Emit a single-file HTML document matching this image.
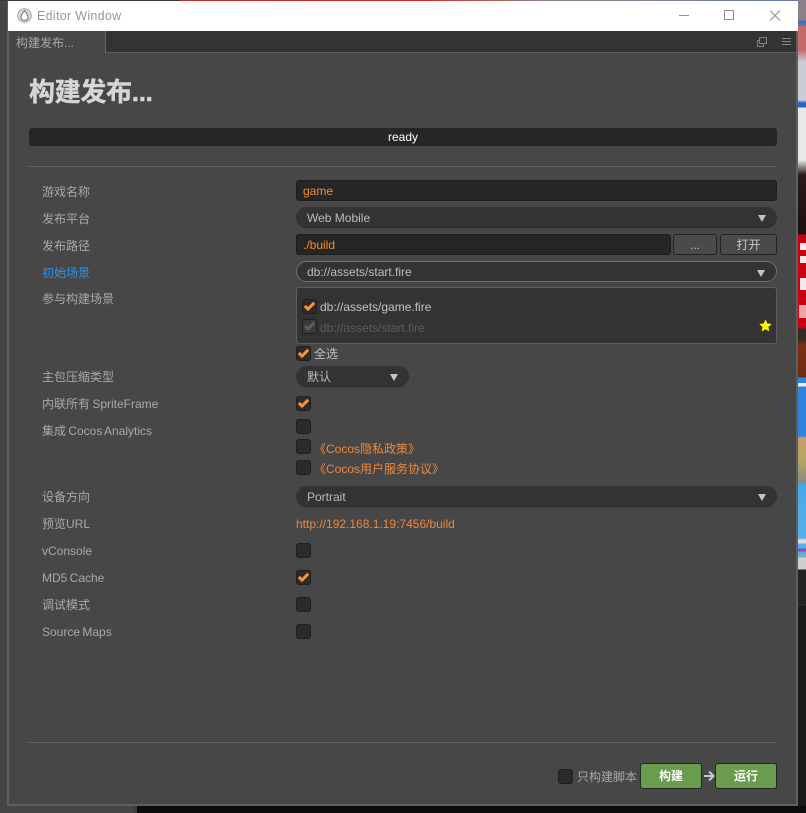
<!DOCTYPE html>
<html><head><meta charset="utf-8"><style>
html,body{margin:0;padding:0}
body{width:806px;height:813px;overflow:hidden;position:relative;background:#454545;font-family:"Liberation Sans","Noto Sans CJK SC",sans-serif;font-size:12px;color:#bdbdbd}
.a{position:absolute;box-sizing:border-box;white-space:nowrap}
.l{position:absolute;left:42px;line-height:16px;color:#a9a9a9;white-space:nowrap;word-spacing:-1px}
.inp{position:absolute;box-sizing:border-box;height:21px;background:#262626;border:1px solid #1d1d1d;border-radius:3px;color:#fb8a25;padding-left:6px;line-height:21px;font-size:12px}
.sel{position:absolute;box-sizing:border-box;height:21px;background:#333;border-radius:11px;color:#bdbdbd;padding-left:11px;line-height:22px;border-bottom:1px solid #2c2c2c}
.sel:after{content:"";position:absolute;right:11px;top:8px;border-left:4.5px solid transparent;border-right:4.5px solid transparent;border-top:7px solid #c4c4c4}
.cb{position:absolute;box-sizing:border-box;width:15px;height:15px;background:#2b2b2b;border:1px solid #1e1e1e;border-radius:3px}
.cb svg{position:absolute;left:0;top:0}
.btn{position:absolute;box-sizing:border-box;height:21px;top:234px;background:#4a4a4a;border:1px solid #222;border-radius:3px;color:#c4c4c4;text-align:center;line-height:20px}
.gb{position:absolute;box-sizing:border-box;top:763px;height:26px;width:62px;background:#6a9c50;border:1px solid #252525;border-radius:3px;color:#fff;font-weight:bold;text-align:center;line-height:25px}
.or{color:#f0873a}
</style></head><body>
<!-- background surroundings -->
<div class="a" style="left:0;top:0;width:806px;height:1px;background:#3a3a3a"></div>
<div class="a" style="left:180px;top:0;width:626px;height:1px;background:linear-gradient(90deg,#b33,#c33 40%,#888 60%,#67a)"></div>
<div class="a" style="left:798px;top:0;width:8px;height:813px;background:linear-gradient(180deg,#8d7f8a 0,#8d7f8a 20px,#3d6fc0 21px,#3d6fc0 23px,#c26a6a 27px,#c26a6a 50px,#c9cdd8 62px,#c9cdd8 100px,#2a60c8 103px,#2a60c8 107px,#e8e8e8 108px,#e8e8e8 160px,#2a1a1a 175px,#1c1010 234px,#c80010 235px,#c80010 328px,#2a2a2a 329px,#3a2a22 340px,#7a3015 345px,#6e2c14 377px,#2f84e0 378px,#2f84e0 383px,#eee 383px,#eee 386px,#2f84e0 387px,#2f84e0 436px,#c99a70 438px,#b2a860 460px,#908880 482px,#45a8e8 484px,#58b0e8 538px,#ddd 540px,#ddd 543px,#58b0e8 544px,#58b0e8 548px,#8a4ac0 549px,#8a4ac0 551px,#58a8d8 552px,#7ab0c8 557px,#cfcfcf 558px,#cfcfcf 569px,#232323 570px,#232323 604px,#333 605px,#1a1a1a 606px,#1a1a1a 813px)"></div>
<div class="a" style="left:800px;top:243px;width:6px;height:7px;background:#f4e8e8"></div>
<div class="a" style="left:800px;top:256px;width:6px;height:7px;background:#f4e8e8"></div>
<div class="a" style="left:800px;top:278px;width:6px;height:12px;background:#f4e8e8"></div>
<div class="a" style="left:799px;top:305px;width:7px;height:13px;background:#e8a8a8"></div>
<div class="a" style="left:133px;top:806px;width:673px;height:7px;background:#0c0c0c"></div>
<div class="a" style="left:133px;top:805px;width:4px;height:8px;background:#3c3c3c"></div>
<!-- window -->
<div class="a" style="left:7px;top:1px;width:791px;height:805px;background:#474747;border-left:2px solid #5f5f5f;border-right:2px solid #5f5f5f;border-bottom:2px solid #5f5f5f"></div>
<!-- title bar -->
<div class="a" style="left:8px;top:1px;width:790px;height:30px;background:#fff"></div>
<svg class="a" style="left:17px;top:8px" width="15" height="15" viewBox="0 0 15 15"><circle cx="7.5" cy="7.5" r="6.8" fill="#d8d8d8" stroke="#aaa"/><path d="M7.5 2.5C5.5 5.5 4 7 4 9a3.5 3.5 0 0 0 7 0C11 7 9.500 5.500 7.500 2.500Z" fill="#fff" stroke="#777"/></svg>
<div class="a" style="left:37px;top:8px;font-size:12.500px;line-height:16px;color:#97979f;letter-spacing:.3px">Editor Window</div>
<svg class="a" style="left:675px;top:7px" width="120" height="18" viewBox="0 0 120 18" fill="none" stroke="#8f8f8f" stroke-width="1"><path d="M4 8.500H14"/><rect x="49.500" y="3.500" width="9" height="9" /><path d="M95 3.500L105 13.500M105 3.500L95 13.500"/></svg>
<!-- tab bar -->
<div class="a" style="left:9px;top:31px;width:787px;height:21px;background:#333"></div>
<div class="a" style="left:9px;top:31px;width:97px;height:22px;background:#474747;border-right:1px solid #666;color:#a8a8a8;padding-left:7px;line-height:24px">构建发布...</div>
<div class="a" style="left:106px;top:52px;width:690px;height:1px;background:#5c5c5c"></div>
<svg class="a" style="left:756px;top:36px" width="12" height="12" viewBox="0 0 12 12" fill="none" stroke="#808080"><rect x="1.500" y="4.500" width="6" height="6"/><rect x="3.500" y="1.500" width="7" height="6" fill="#333"/></svg>
<svg class="a" style="left:781px;top:37px" width="11" height="10" viewBox="0 0 11 10" stroke="#888"><path d="M1 1.500H10M1 4.500H10M1 7.500H10"/></svg>
<!-- heading -->
<div class="a" style="left:29px;top:74px;font-size:26px;font-weight:bold;line-height:36px;color:#d6d6d6;-webkit-text-stroke:.4px #d6d6d6;letter-spacing:-.3px">构建发布...</div>
<!-- progress -->
<div class="a" style="left:29px;top:128px;width:748px;height:18px;background:#262626;border-radius:3px;color:#fff;text-align:center;line-height:19px">ready</div>
<div class="a" style="left:29px;top:166px;width:748px;height:1px;background:#636363"></div>
<!-- labels -->
<div class="l" style="top:184px">游戏名称</div>
<div class="l" style="top:211px">发布平台</div>
<div class="l" style="top:238px">发布路径</div>
<div class="l" style="top:265px;color:#2d8fe8">初始场景</div>
<div class="l" style="top:291px">参与构建场景</div>
<div class="l" style="top:369px">主包压缩类型</div>
<div class="l" style="top:396px">内联所有 SpriteFrame</div>
<div class="l" style="top:423px">集成 Cocos Analytics</div>
<div class="l" style="top:489px">设备方向</div>
<div class="l" style="top:516px">预览URL</div>
<div class="l" style="top:543px">vConsole</div>
<div class="l" style="top:570px">MD5 Cache</div>
<div class="l" style="top:597px">调试模式</div>
<div class="l" style="top:624px">Source Maps</div>
<!-- fields -->
<div class="inp" style="left:296px;top:180px;width:481px">game</div>
<div class="sel" style="left:296px;top:207px;width:481px">Web Mobile</div>
<div class="inp" style="left:296px;top:234px;width:375px">./build</div>
<div class="btn" style="left:673px;width:44px">...</div>
<div class="btn" style="left:720px;width:57px">打开</div>
<div class="sel" style="left:296px;top:261px;width:481px;border:1px solid #707070;line-height:20px;padding-left:10px">db://assets/start.fire</div>
<!-- list -->
<div class="a" style="left:296px;top:287px;width:481px;height:57px;background:#333;border:1px solid #5e5e5e;border-radius:3px"></div>
<div class="cb" style="left:302px;top:299px"><svg width="13" height="13" viewBox="0 0 13 13" fill="none" stroke="#fd942b" stroke-width="3"><path d="M1.800 6L5 9L11.200 2.800"/></svg></div>
<div class="a" style="left:320px;top:299px;line-height:16px;color:#c4c4c4">db://assets/game.fire</div>
<div class="cb" style="left:302px;top:319px;background:#3a3a3a"><svg width="13" height="13" viewBox="0 0 13 13" fill="none" stroke="#5c5c5c" stroke-width="3"><path d="M1.800 6L5 9L11.200 2.800"/></svg></div>
<div class="a" style="left:320px;top:320px;line-height:16px;color:#5c5c5c">db://assets/start.fire</div>
<svg class="a" style="left:759px;top:319px" width="13" height="13" viewBox="0 0 13 13"><path d="M6.500 .5L8.300 4.500L12.700 5L9.400 8L10.300 12.400L6.500 10.200L2.700 12.400L3.600 8L.3 5L4.700 4.500Z" fill="#ff0"/></svg>
<div class="cb" style="left:296px;top:346px"><svg width="13" height="13" viewBox="0 0 13 13" fill="none" stroke="#fd942b" stroke-width="3"><path d="M1.800 6L5 9L11.200 2.800"/></svg></div>
<div class="a" style="left:314px;top:346px;line-height:16px;color:#c0c0c0">全选</div>
<div class="sel" style="left:296px;top:366px;width:113px">默认</div>
<div class="cb" style="left:296px;top:396px"><svg width="13" height="13" viewBox="0 0 13 13" fill="none" stroke="#fd942b" stroke-width="3"><path d="M1.800 6L5 9L11.200 2.800"/></svg></div>
<div class="cb" style="left:296px;top:419px"></div>
<div class="cb" style="left:296px;top:439px"></div>
<div class="a or" style="left:314px;top:441px;line-height:16px">《Cocos隐私政策》</div>
<div class="cb" style="left:296px;top:460px"></div>
<div class="a or" style="left:314px;top:461px;line-height:16px">《Cocos用户服务协议》</div>
<div class="sel" style="left:296px;top:486px;width:481px">Portrait</div>
<div class="a or" style="left:296px;top:516px;line-height:16px">http://192.168.1.19:7456/build</div>
<div class="cb" style="left:296px;top:543px"></div>
<div class="cb" style="left:296px;top:570px"><svg width="13" height="13" viewBox="0 0 13 13" fill="none" stroke="#fd942b" stroke-width="3"><path d="M1.800 6L5 9L11.200 2.800"/></svg></div>
<div class="cb" style="left:296px;top:597px"></div>
<div class="cb" style="left:296px;top:624px"></div>
<!-- footer -->
<div class="a" style="left:29px;top:742px;width:748px;height:1px;background:#636363"></div>
<div class="cb" style="left:558px;top:769px"></div>
<div class="a" style="left:577px;top:769px;line-height:16px;color:#a8a8a8">只构建脚本</div>
<div class="gb" style="left:640px">构建</div>
<svg class="a" style="left:704px;top:770px" width="11" height="12" viewBox="0 0 11 12" fill="none" stroke="#c8c8c8" stroke-width="2"><path d="M0 6H9M5 1.500L9.500 6L5 10.500"/></svg>
<div class="gb" style="left:715px">运行</div>
</body></html>
